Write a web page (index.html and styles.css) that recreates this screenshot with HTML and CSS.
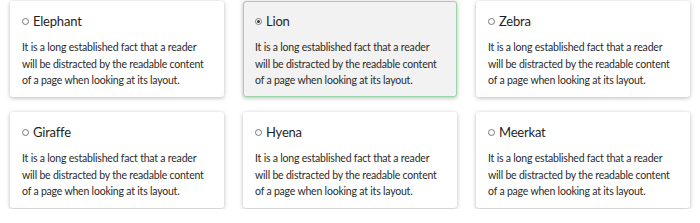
FILE: index.html
```html
<!DOCTYPE html>
<html lang="en">

<head>
  <meta charset="UTF-8" />
  <meta name="viewport" content="width=device-width, initial-scale=1.0" />
  <title>Animal Picker</title>
  <link rel="stylesheet" href="styles.css">
</head>

<body>
  <div class="grid">
    <label class="card">
      <div class="card-title"><span class="radio"></span>Elephant</div>
      <p>It is a long established fact that a reader will be distracted by the readable content of a page when looking at its layout.</p>
    </label>
    <label class="card selected">
      <div class="card-title"><span class="radio"></span>Lion</div>
      <p>It is a long established fact that a reader will be distracted by the readable content of a page when looking at its layout.</p>
    </label>
    <label class="card">
      <div class="card-title"><span class="radio"></span>Zebra</div>
      <p>It is a long established fact that a reader will be distracted by the readable content of a page when looking at its layout.</p>
    </label>
    <label class="card">
      <div class="card-title"><span class="radio"></span>Giraffe</div>
      <p>It is a long established fact that a reader will be distracted by the readable content of a page when looking at its layout.</p>
    </label>
    <label class="card">
      <div class="card-title"><span class="radio"></span>Hyena</div>
      <p>It is a long established fact that a reader will be distracted by the readable content of a page when looking at its layout.</p>
    </label>
    <label class="card">
      <div class="card-title"><span class="radio"></span>Meerkat</div>
      <p>It is a long established fact that a reader will be distracted by the readable content of a page when looking at its layout.</p>
    </label>
  </div>
</body>

</html>
```

FILE: styles.css
```css
body {
  margin: 0;
  padding: 1px 10px;
  font-family: Lato, "Open Sans", sans-serif;
  background-color: #fff;
  color: #2b2b2b;
}

.grid {
  display: grid;
  grid-template-columns: repeat(3, 1fr);
  column-gap: 19px;
  row-gap: 15.5px;
}

.card {
  display: block;
  background: #fff;
  border: 1px solid transparent;
  border-radius: 3px;
  padding: 9px 11px 7px;
  box-shadow: 0 1px 4px rgba(0, 0, 0, 0.28);
  cursor: pointer;
}

.card.selected {
  background: #f2f2f2;
  border-color: #9bd5a5;
}

.card-title {
  display: flex;
  align-items: center;
  gap: 4px;
  font-size: 13px;
  line-height: 20px;
  letter-spacing: -0.2px;
  color: #1f1f1f;
}

.radio {
  width: 5px;
  height: 5px;
  border: 1px solid #777;
  border-radius: 50%;
  background: #fff;
  position: relative;
}

.selected .radio::after {
  content: "";
  position: absolute;
  left: 1px;
  top: 1px;
  width: 3px;
  height: 3px;
  border-radius: 50%;
  background: #333;
}

.card p {
  margin: 8px 0 0;
  font-size: 10.5px;
  line-height: 16.5px;
  letter-spacing: -0.2px;
}
```
